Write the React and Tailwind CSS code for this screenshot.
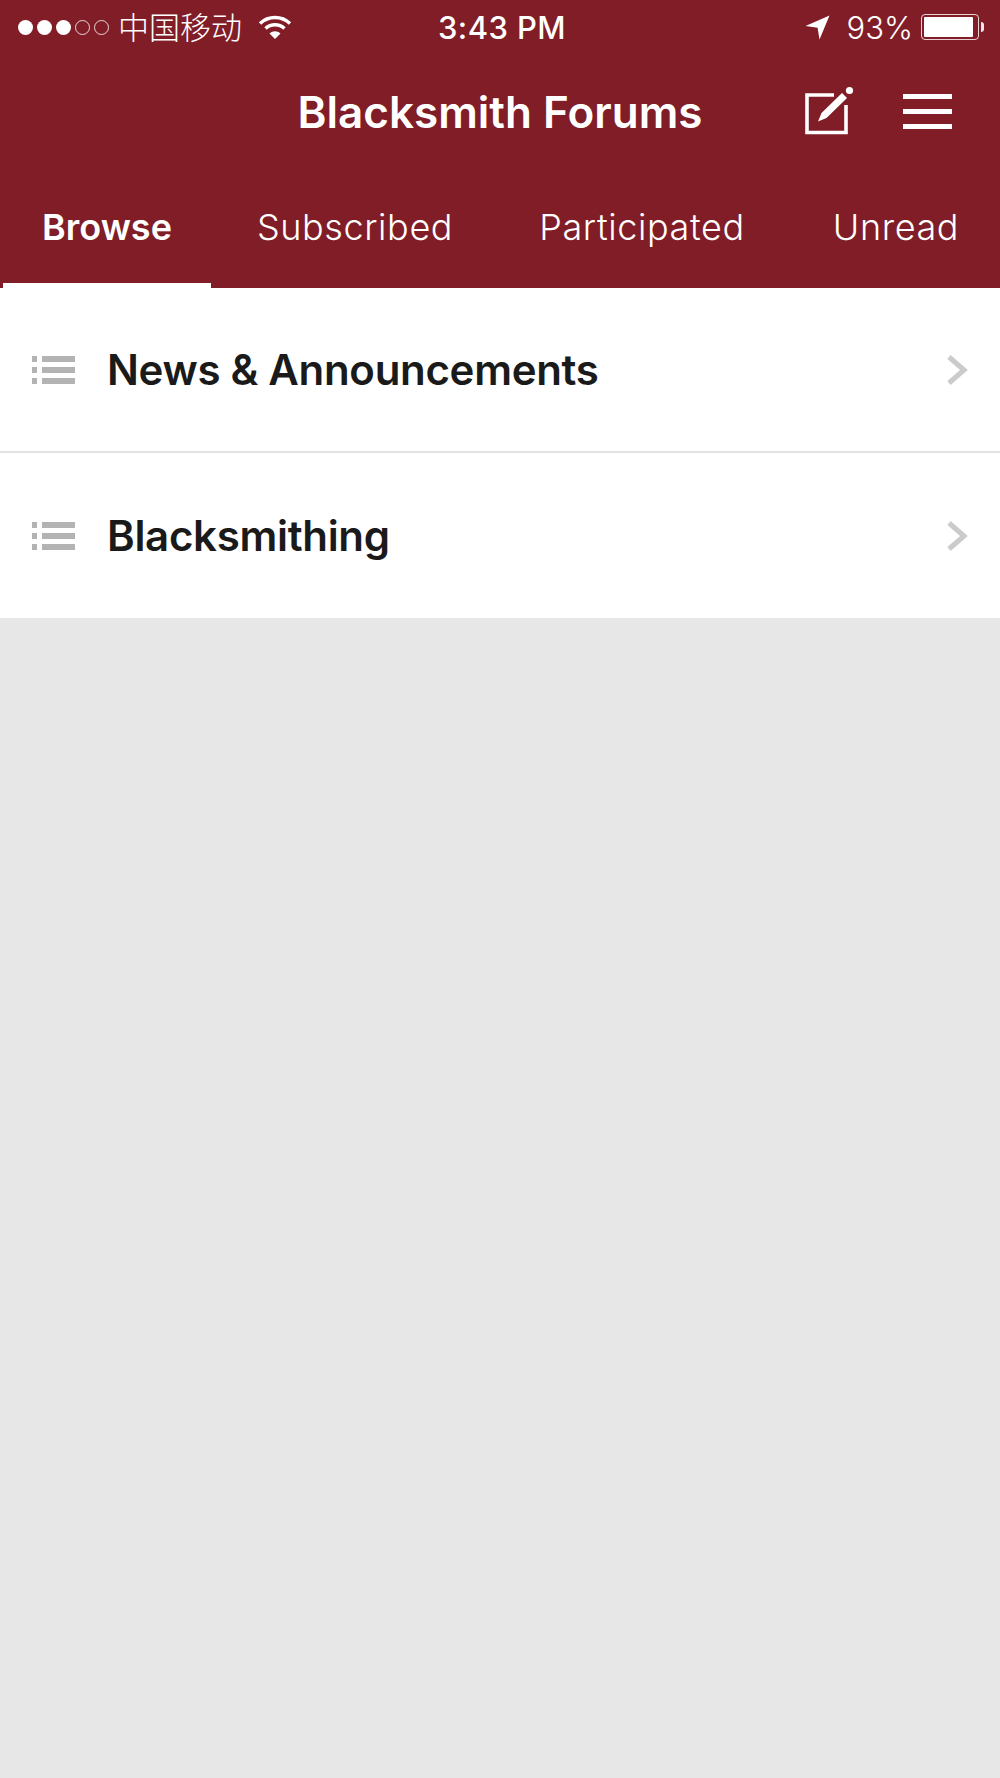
const sans = "font-['Inter','Noto_Sans_CJK_SC',sans-serif]";

const tabs = [
  { label: "Browse", width: "w-[208px]", active: true },
  { label: "Subscribed", width: "w-[288px]" },
  { label: "Participated", width: "w-[286px]" },
  { label: "Unread", width: "w-[222px]" },
];

const forums = ["News & Announcements", "Blacksmithing"];

function Signal() {
  return (
    <div className="flex items-center gap-[4px]">
      {[0, 1, 2].map((i) => (
        <div key={i} className="w-[15px] h-[15px] rounded-full bg-white" />
      ))}
      {[0, 1].map((i) => (
        <div key={i} className="w-[15px] h-[15px] rounded-full border border-white/80" />
      ))}
    </div>
  );
}

function Wifi() {
  return (
    <svg width="34" height="26" viewBox="0 0 34 26" fill="none">
      <path d="M2 9.5C10.5 1.5 23.5 1.5 32 9.5" stroke="white" strokeWidth="3.4" />
      <path d="M7.5 14.5C13 9.5 21 9.5 26.5 14.5" stroke="white" strokeWidth="3.4" />
      <path d="M11.5 19.5L17 25L22.5 19.5C19 16.5 15 16.5 11.5 19.5Z" fill="white" />
    </svg>
  );
}

function LocationArrow() {
  return (
    <svg width="25" height="25" viewBox="0 0 25 25">
      <path d="M24.5 0.5L14.5 24.5L12.6 12.8L0.5 11Z" fill="white" />
    </svg>
  );
}

function Battery() {
  return (
    <div className="flex items-center gap-[2px]">
      <div className="w-[58px] h-[26px] rounded-[4px] border border-white/80 p-[2px] pr-[5px]">
        <div className="w-full h-full rounded-[1px] bg-white" />
      </div>
      <div className="w-[3px] h-[10px] rounded-r-full bg-white/90" />
    </div>
  );
}

function ComposeIcon() {
  return (
    <svg width="50" height="50" viewBox="0 0 50 50" fill="none">
      <path d="M30 9H3V46.5H42V19" stroke="white" strokeWidth="3.6" />
      <path d="M14 35.5L17.5 27L38 7L43 12L22.5 32Z" fill="white" />
      <circle cx="45.5" cy="4.5" r="3.6" fill="white" />
    </svg>
  );
}

function Burger() {
  return (
    <div className="flex flex-col gap-[10px] w-[49px]">
      <div className="h-[5px] bg-white" />
      <div className="h-[5px] bg-white" />
      <div className="h-[5px] bg-white" />
    </div>
  );
}

function ListIcon() {
  return (
    <div className="flex flex-col gap-[5px] w-[43px]">
      {[0, 1, 2].map((i) => (
        <div key={i} className="flex gap-[5px] h-[6px]">
          <div className="w-[5px] bg-[#b3b3b3]" />
          <div className="flex-1 bg-[#b3b3b3]" />
        </div>
      ))}
    </div>
  );
}

function Chevron() {
  return (
    <svg width="22" height="32" viewBox="0 0 22 32" fill="none">
      <path d="M3 3L18 16L3 29" stroke="#cbcbcb" strokeWidth="5" />
    </svg>
  );
}

export default function App() {
  return (
    <div className={`min-h-[1778px] bg-[#e7e7e7] ${sans}`}>
      <header className="bg-[#801d27] text-white h-[288px] flex flex-col">
        {/* Status bar */}
        <div className="h-[54px] flex items-center justify-between pl-[18px] pr-[16px] relative">
          <div className="flex items-center">
            <Signal />
            <span className="ml-[9px] text-[31px] font-light leading-none">中国移动</span>
            <div className="ml-[16px]">
              <Wifi />
            </div>
          </div>
          <span className="absolute left-[438px] top-[12px] text-[31px] leading-none font-medium tracking-[0.4px]">3:43 PM</span>
          <div className="flex items-center">
            <LocationArrow />
            <span className="ml-[17px] mr-[8px] text-[31px] font-light leading-none">93%</span>
            <Battery />
          </div>
        </div>

        {/* Title row */}
        <div className="h-[116px] flex items-center justify-center relative">
          <h1 className="text-[44px] font-semibold leading-none pb-[1px]">Blacksmith Forums</h1>
          <div className="absolute right-[48px] top-[32px] flex items-center gap-[49px]">
            <ComposeIcon />
            <Burger />
          </div>
        </div>

        {/* Tabs */}
        <nav className="flex-1 flex pl-[3px] overflow-hidden">
          {tabs.map((tab) => (
            <div
              key={tab.label}
              className={`${tab.width} shrink-0 flex items-center justify-center border-b-[5px] text-[36px] leading-none ${
                tab.active ? "border-white font-semibold" : "border-transparent font-light tracking-[0.6px]"
              }`}
            >
              {tab.label}
            </div>
          ))}
        </nav>
      </header>

      <main className="bg-white">
        {forums.map((name, i) => (
          <div
            key={name}
            className={`flex items-center pl-[32px] pr-[32px] text-[#1a1a1a] ${
              i === 0 ? "h-[165px] border-b-2 border-[#e2e2e2]" : "h-[165px]"
            }`}
          >
            <ListIcon />
            <span className="ml-[32px] text-[42px] font-semibold tracking-[-0.3px] leading-none flex-1">{name}</span>
            <Chevron />
          </div>
        ))}
      </main>
    </div>
  );
}
